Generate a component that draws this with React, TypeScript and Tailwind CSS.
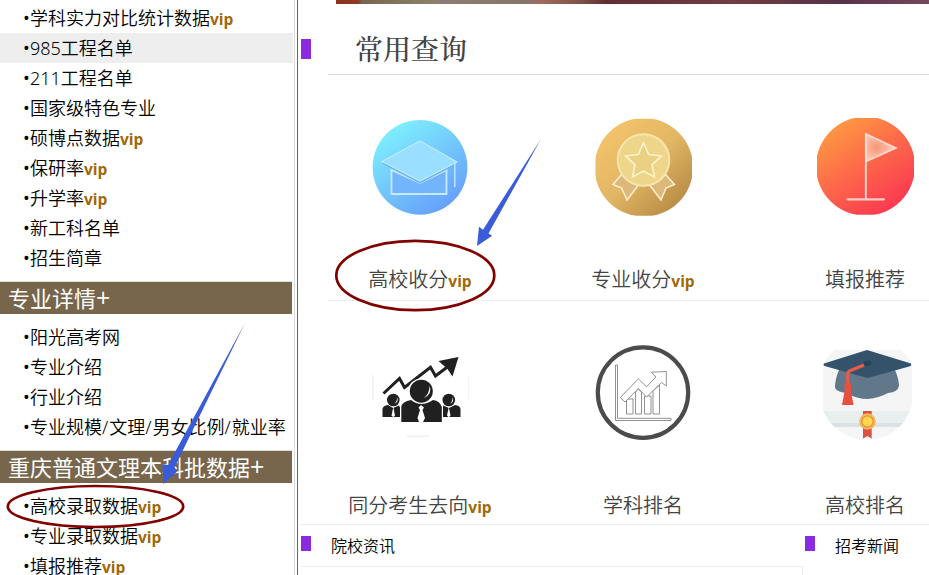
import type { ReactNode } from "react";

type Item = { text: string; vip?: boolean; active?: boolean };

const sans = "font-['Noto_Sans','Noto_Sans_CJK_SC',sans-serif]";

const general: Item[] = [
  { text: "学科实力对比统计数据", vip: true },
  { text: "985工程名单", active: true },
  { text: "211工程名单" },
  { text: "国家级特色专业" },
  { text: "硕博点数据", vip: true },
  { text: "保研率", vip: true },
  { text: "升学率", vip: true },
  { text: "新工科名单" },
  { text: "招生简章" },
];

const majors: Item[] = [
  { text: "阳光高考网" },
  { text: "专业介绍" },
  { text: "行业介绍" },
  { text: "专业规模/文理/男女比例/就业率" },
];

const admissions: Item[] = [
  { text: "高校录取数据", vip: true },
  { text: "专业录取数据", vip: true },
  { text: "填报推荐", vip: true },
];

function Vip() {
  return <span className="font-['Open_Sans',sans-serif] text-[15.5px] font-bold text-[#a06808]">vip</span>;
}

/** Text whose slashes are set a little wider than the font's own. */
function Spaced({ text }: { text: string }) {
  return text.split("/").map((part, i) => (
    <span key={part}>
      {i > 0 && <span className="tracking-[1px]">/</span>}
      {part}
    </span>
  ));
}

function Menu({ items }: { items: Item[] }) {
  return (
    <ul className="w-[293px]">
      {items.map((item) => (
        <li
          key={item.text}
          className={`h-[30px] whitespace-nowrap pl-[23px] text-[18px] font-[350] leading-[30px] text-black ${item.active ? "bg-[#eeeeee]" : ""}`}
        >
          <span className="inline-block w-[7px] font-['Open_Sans',sans-serif] font-normal">•</span>
          <Spaced text={item.text} />
          {item.vip && <Vip />}
        </li>
      ))}
    </ul>
  );
}

function Heading({ children }: { children: ReactNode }) {
  return (
    <h2 className="h-[33px] w-[292px] whitespace-nowrap border-t border-[#dddddd] bg-[#77664c] pl-2 text-[22px] leading-[32px] text-white">
      {children}
      <span className="font-['Open_Sans',sans-serif] text-[25px] font-normal leading-none">+</span>
    </h2>
  );
}

function BlueCap() {
  return (
    <svg viewBox="371 117 98 98" className="size-[98px]">
      <defs>
        <linearGradient id="blue" x1="0.15" y1="0.05" x2="0.8" y2="1">
          <stop offset="0" stopColor="#7ff3fd" />
          <stop offset="0.5" stopColor="#73c6fb" />
          <stop offset="1" stopColor="#659bfb" />
        </linearGradient>
      </defs>
      <circle cx="420" cy="167.3" r="47.4" fill="url(#blue)" />
      <path d="M391.5 170V194H446.5V170L420 183Z" fill="#72b5fc" stroke="#c5eaff" strokeWidth="1.8" />
      <path d="M382 163.5L420 142L457 164L420 183.5Z" fill="#6cb1ee" />
      <path d="M382 161.5L420 141L457 162L420 181Z" fill="#9adfff" stroke="#bdecff" strokeWidth="1.2" />
      <path d="M454.8 163V187" stroke="#b9dfff" strokeWidth="1.6" />
    </svg>
  );
}

function GoldMedal() {
  return (
    <svg viewBox="594 117 98 99" className="-mb-px h-[99px] w-[98px]">
      <defs>
        <linearGradient id="gold" x1="0.1" y1="0.1" x2="0.85" y2="0.9">
          <stop offset="0" stopColor="#f5c36b" />
          <stop offset="0.5" stopColor="#e2b765" />
          <stop offset="1" stopColor="#b88c46" />
        </linearGradient>
        <clipPath id="goldClip"><rect x="595.5" y="118.8" width="96.5" height="97" /></clipPath>
      </defs>
      <circle cx="643.8" cy="167.3" r="49.3" fill="url(#gold)" clipPath="url(#goldClip)" />
      <g fill="#dcb87c" stroke="#fff0cc" strokeWidth="1.5">
        <path d="M621 175L613 184.5L621.5 188L627 200L640 183Z" />
        <path d="M666 175L674.5 184.5L666 188L661 200L648 183Z" />
      </g>
      <circle cx="643.5" cy="160" r="25.8" fill="#edd58a" stroke="#fae5ad" strokeWidth="2" />
      <path d="M643.5 143L648.8 154.5L661.5 156L652 164.5L654.5 177L643.5 171L632.5 177L635 164.5L625.5 156L638.2 154.5Z" fill="#ead083" stroke="#fff2c8" strokeWidth="1.7" />
    </svg>
  );
}

function RedFlag() {
  return (
    <svg viewBox="816 117 98 98" className="size-[98px]">
      <defs>
        <linearGradient id="red" x1="0.15" y1="0.1" x2="0.75" y2="0.95">
          <stop offset="0" stopColor="#ff9842" />
          <stop offset="0.5" stopColor="#fd674a" />
          <stop offset="1" stopColor="#fb3850" />
        </linearGradient>
        <radialGradient id="flagFill" cx="0.35" cy="0.48" r="0.5">
          <stop offset="0" stopColor="#f99673" />
          <stop offset="1" stopColor="#fdc5b4" />
        </radialGradient>
        <clipPath id="redClip"><rect x="817" y="118" width="97" height="96.8" /></clipPath>
      </defs>
      <circle cx="865.5" cy="166.2" r="49.5" fill="url(#red)" clipPath="url(#redClip)" />
      <path d="M866 134L896 148L866 161.5Z" fill="url(#flagFill)" stroke="#ffdcd0" strokeWidth="1.5" />
      <path d="M865.8 133V199" stroke="#ffe0d5" strokeWidth="1.8" />
      <path d="M847.5 199.3H884" stroke="#ffcbc9" strokeWidth="2.2" strokeLinecap="round" />
    </svg>
  );
}

function TeamGrowth() {
  return (
    <svg viewBox="371 343 98 98" className="size-[98px]">
      <g stroke="#dadada" strokeWidth="1" fill="none">
        <path d="M373 375V400M469 377V399M407 436.2H429" opacity="0.6" />
      </g>
      <path d="M383.5 393.5L399.5 378.5L404.5 387.5L430.5 367.2L435.5 376L448 366.5" fill="none" stroke="#202020" strokeWidth="3" />
      <path d="M438.5 361L458.5 357L452.5 376.5L447.5 369Z" fill="#202020" />
      <g fill="#202020">
        <circle cx="393.3" cy="400" r="6.3" />
        <path d="M382.5 417V409Q383 405.5 388 405L393 408L399 405.5L400 407.5V417Z" />
        <circle cx="448.8" cy="400" r="6.3" />
        <path d="M460.5 417V409Q460 405.5 455 405L449 408L443 405.5V417Z" />
      </g>
      <circle cx="421" cy="391.5" r="13" fill="#fff" />
      <circle cx="421.3" cy="391.2" r="11.5" fill="#202020" />
      <path d="M401.3 422V407Q402 401.5 411 400Q421 408 433 400Q440 401 441.8 407V422Z" fill="#202020" />
      <path d="M421 405L418.5 407.5L420 410L417.5 418L419 422H423L425 418L422.5 410L424 407.5Z" fill="#fff" />
      <path d="M393.3 407L391.5 415.5L393.3 417.2L395 415.5ZM448.8 407L447 415.5L448.8 417.2L450.5 415.5Z" fill="#fff" />
      <path d="M429.5 385.5Q430 393 423.5 398.5Q433 393.5 429.5 385.5M397 397Q397.5 401.5 394 404Q399.5 402 397 397M452.5 397Q453 401.5 449.5 404Q455 402 452.5 397" fill="#fff" />
    </svg>
  );
}

function RankChart() {
  return (
    <svg viewBox="594 343 98 98" className="size-[98px]">
      <circle cx="643" cy="392.6" r="45.2" fill="#fff" stroke="#4b4b4b" strokeWidth="4.2" />
      <g fill="#fff" stroke="#858585" strokeWidth="0.9">
        <path d="M615.5 365H617.5V418.3H671V420.5H615.5Z" />
        <path d="M626.5 399H633V414H626.5ZM635.5 392L638.3 389L641.5 392V414H635.5ZM644.5 396H651V414H644.5ZM653 391L659.5 385V414H653Z" />
        <path d="M620.3 397.5L638.4 378.8L646.5 386.8L656 377L651.5 372.2L666.3 371.5V386L661.5 382.5L646.5 397L638.4 388.5L625 402Z" />
      </g>
    </svg>
  );
}

function GraduateCap() {
  return (
    <svg viewBox="816 343 98 98" className="size-[98px]">
      <defs>
        <clipPath id="capClip">
          <path d="M834 350H901L912 362V404Q907 424 889 435Q867 444 846 435Q828 425 823 410V363Z" />
        </clipPath>
      </defs>
      <g clipPath="url(#capClip)">
        <rect x="823" y="350" width="89" height="91" fill="#f5f5f5" />
        <rect x="823" y="411" width="89" height="12" fill="#e9eeef" />
        <rect x="823" y="423" width="89" height="4" fill="#dce2e4" />
      </g>
      <path d="M839 370Q835 379 835 388Q837 392 846 393Q857 399 868 399Q879 398 888 393Q898 392 899 386Q899 379 895 370Z" fill="#61788b" />
      <path d="M824 363.5L867 350L911 363.5Q912 365.5 910 366.3L867.5 378L824.5 366Q822.8 365 824 363.5Z" fill="#34536b" />
      <ellipse cx="867.5" cy="363.3" rx="4" ry="2.7" fill="#294359" />
      <path d="M864 365L849.5 371Q847.5 372 847.7 375V384" fill="none" stroke="#e75a4d" strokeWidth="3.2" />
      <path d="M844.5 384Q848 379.5 851.2 384L850.8 390L853.5 405H842L844.8 390Z" fill="#e7503f" />
      <path d="M863 411H871.7V438.5L867.4 436L863 438.5Z" fill="#db5044" />
      <circle cx="867.5" cy="421.5" r="8.3" fill="#f5ba58" />
      <circle cx="867.5" cy="421.5" r="5.7" fill="#ffd84c" stroke="#eb9045" strokeWidth="1.3" />
    </svg>
  );
}

const rows = [
  [
    { label: "高校收分", vip: true, icon: <BlueCap /> },
    { label: "专业收分", vip: true, icon: <GoldMedal /> },
    { label: "填报推荐", vip: false, icon: <RedFlag /> },
  ],
  [
    { label: "同分考生去向", vip: true, icon: <TeamGrowth /> },
    { label: "学科排名", vip: false, icon: <RankChart /> },
    { label: "高校排名", vip: false, icon: <GraduateCap /> },
  ],
];

function ShortcutRow({ row, className }: { row: (typeof rows)[number]; className: string }) {
  return (
    <div className={`grid w-[666px] shrink-0 grid-cols-[222px_224px_220px] ${className}`}>
      {row.map(({ label, vip, icon }) => (
        <div key={label} className="flex flex-col items-center">
          {icon}
          <div className="mt-[50px] h-[30px] whitespace-nowrap text-[20px] font-[350] leading-[30px] text-[#444444]">
            {label}
            {vip && <Vip />}
          </div>
        </div>
      ))}
    </div>
  );
}

/** Hand-drawn callouts that sit over the page. */
function Annotations() {
  return (
    <svg viewBox="0 0 929 575" className="pointer-events-none absolute inset-0 h-[575px] w-[929px]">
      <g fill="none" stroke="#800000" strokeWidth="2.7">
        <ellipse cx="415.3" cy="275.5" rx="79" ry="34.7" />
        <ellipse cx="95.5" cy="506.5" rx="87.7" ry="20.5" />
      </g>
      <g fill="#3b5cd8">
        <path d="M541 139L488.5 233.5L492.2 235.8L477 246L479 226.8L483 229.8Z" />
        <path d="M245 323L174.5 467.5L177 471.7L163.3 484L162.5 464L168 465Z" />
      </g>
    </svg>
  );
}

export default function App() {
  return (
    <div className={`relative flex h-[575px] w-[929px] overflow-hidden bg-white ${sans}`}>
      <aside className="h-full w-[295px] shrink-0 overflow-hidden border-r border-[#d8d8d8] pt-[3px]">
        <Menu items={general} />
        <div className="mt-2"><Heading>专业详情</Heading></div>
        <div className="mt-2"><Menu items={majors} /></div>
        <div className="mt-2"><Heading>重庆普通文理本科批数据</Heading></div>
        <div className="mt-2"><Menu items={admissions} /></div>
      </aside>
      <main className="ml-[2px] flex h-full min-w-0 flex-1 flex-col overflow-hidden border-l border-[#77664c]">
        <div className="ml-[38px] h-1 shrink-0 bg-[linear-gradient(90deg,#8d321c_0px,#8d3a24_22px,#786452_26px,#80755f_62px,#8b8069_98px,#8c7c73_104px,#87756a_190px,#a16b61_204px,#7c5148_246px,#632d34_270px,#713c42_400px,#563247_500px,#75485d_593px)]" />
        <div className="flex h-[70px] shrink-0 pl-[3px]">
          <span className="mt-[35px] h-5 w-[10px] bg-[#8a2be2]" />
          <h1 className="ml-[17px] h-[71px] flex-1 border-b border-[#dddddd] pl-[27px] pt-[23px] font-['Noto_Serif_CJK_SC','Noto_Sans_CJK_SC',serif] text-[28px] font-medium leading-[42px] text-[#444444]">
            常用查询
          </h1>
        </div>
        <ShortcutRow row={rows[0]} className="ml-[11px] h-[226px] pt-[43px]" />
        <div className="ml-[30px] h-px shrink-0 bg-[#eeeeee]" />
        <ShortcutRow row={rows[1]} className="ml-[11px] h-[223px] pt-[42px]" />
        <div className="ml-[3px] h-px shrink-0 bg-[#eeeeee]" />
        <div className="ml-[3px] flex flex-1 font-['Noto_Sans_CJK_SC',sans-serif] text-[16px] leading-[40px] text-black">
          <section className="w-[502px]">
            <h3 className="flex h-[41px] font-[350]">
              <span className="mr-5 mt-[11px] h-[15px] w-[10px] bg-[#8a2be2]" />
              院校资讯
            </h3>
            <div className="h-3 border-r border-t border-[#eeeeee]" />
          </section>
          <section className="ml-[2px]">
            <h3 className="flex font-[350]">
              <span className="mr-5 mt-[11px] h-[15px] w-[10px] bg-[#8a2be2]" />
              招考新闻
            </h3>
          </section>
        </div>
      </main>
      <Annotations />
    </div>
  );
}
